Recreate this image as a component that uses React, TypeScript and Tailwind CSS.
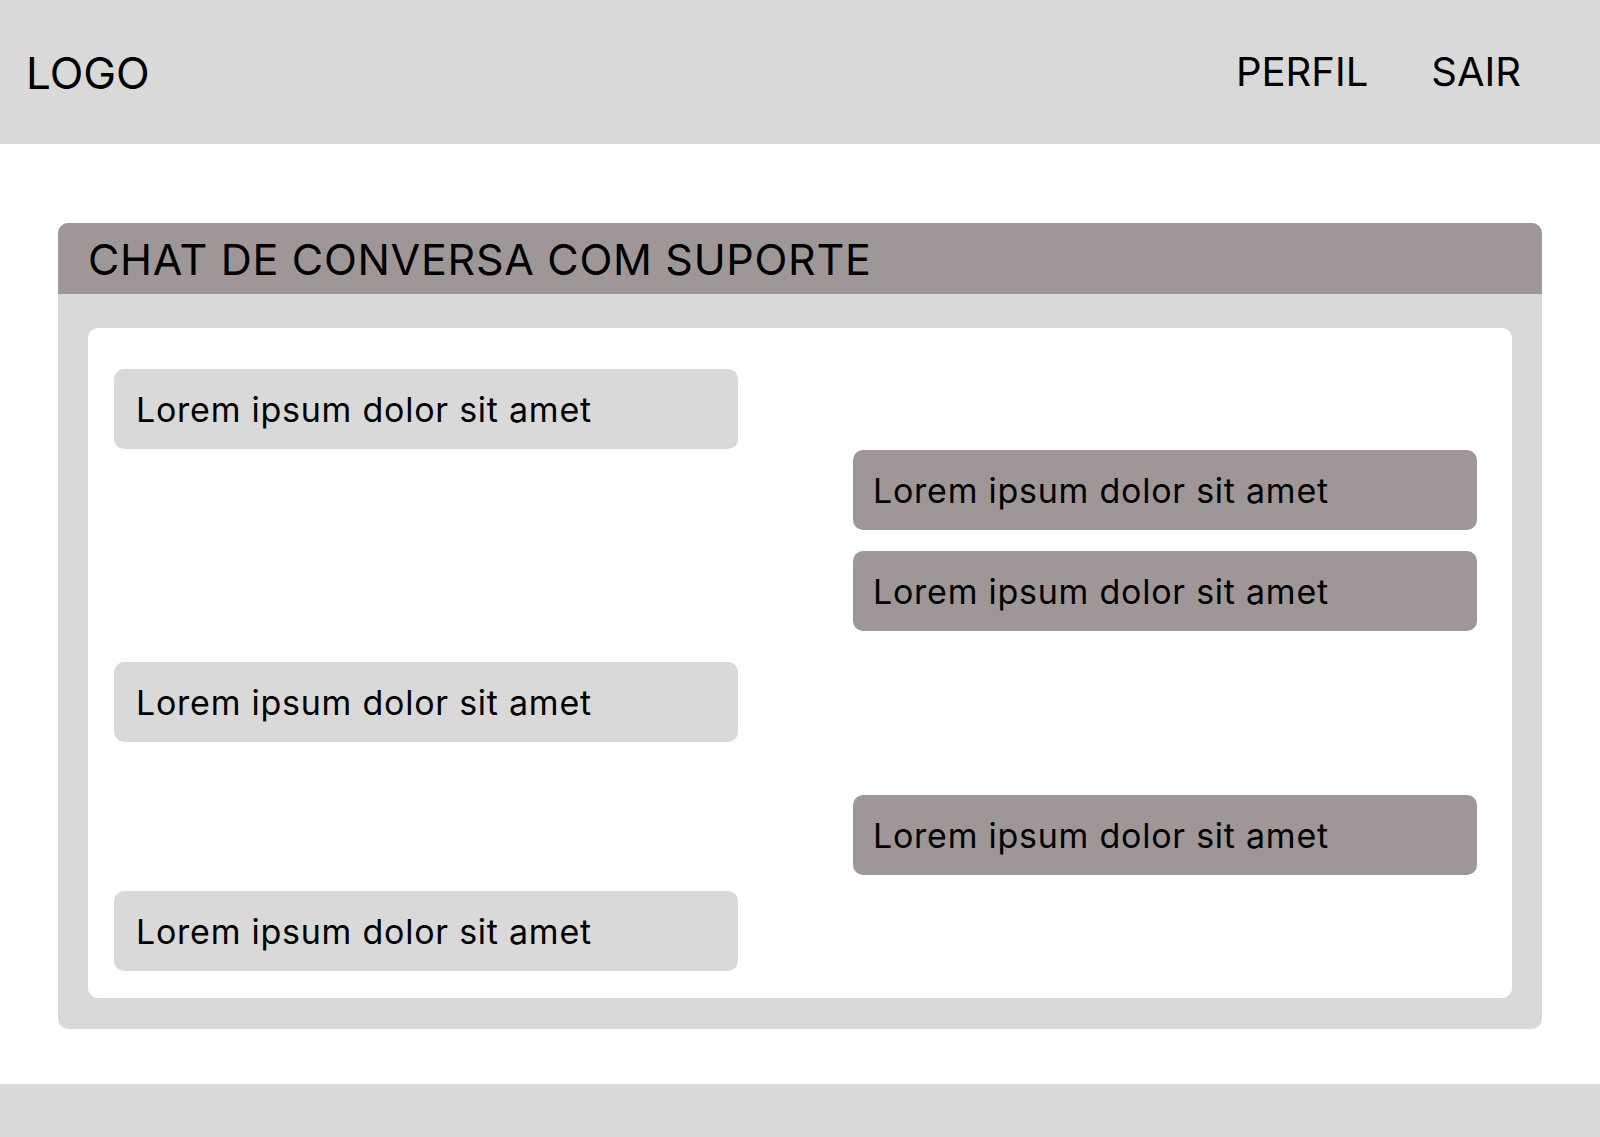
const messages: { side: "left" | "right"; mt: string }[] = [
  { side: "left", mt: "mt-0" },
  { side: "right", mt: "mt-px" },
  { side: "right", mt: "mt-[21px]" },
  { side: "left", mt: "mt-[31px]" },
  { side: "right", mt: "mt-[53px]" },
  { side: "left", mt: "mt-[16px]" },
];

export default function App() {
  return (
    <div className="min-h-[1137px] w-full bg-white flex flex-col font-['Inter',sans-serif] text-black">
      <header className="h-[144px] bg-[#d9d9d9] flex items-center justify-between pl-[26px] pr-[79px]">
        <span className="text-[44px] leading-none mt-[2px]">LOGO</span>
        <nav className="flex items-center gap-[63px] text-[40px] leading-none">
          <a href="#">PERFIL</a>
          <a href="#">SAIR</a>
        </nav>
      </header>

      <main className="flex-1 px-[58px] pt-[79px] pb-[55px]">
        <section className="rounded-[10px] bg-[#d9d9d9] overflow-hidden">
          <div className="h-[71px] bg-[#9f9797] flex items-center pl-[30px]">
            <h1 className="text-[43px] tracking-[0.7px] leading-none mt-[2px]">
              CHAT DE CONVERSA COM SUPORTE
            </h1>
          </div>
          <div className="px-[30px] pt-[34px] pb-[31px]">
            <div className="bg-white rounded-[10px] flex flex-col pt-[41px] pb-[27px] pl-[26px] pr-[35px]">
              {messages.map((m, i) => (
                <div
                  key={i}
                  className={`${m.mt} w-[624px] h-[80px] rounded-[10px] flex items-center text-[34px] tracking-[0.75px] ${
                    m.side === "left"
                      ? "self-start bg-[#d9d9d9] pl-[22px]"
                      : "self-end bg-[#9f9797] pl-[20px]"
                  }`}
                >
                  Lorem ipsum dolor sit amet
                </div>
              ))}
            </div>
          </div>
        </section>
      </main>

      <footer className="h-[53px] bg-[#d9d9d9]" />
    </div>
  );
}
